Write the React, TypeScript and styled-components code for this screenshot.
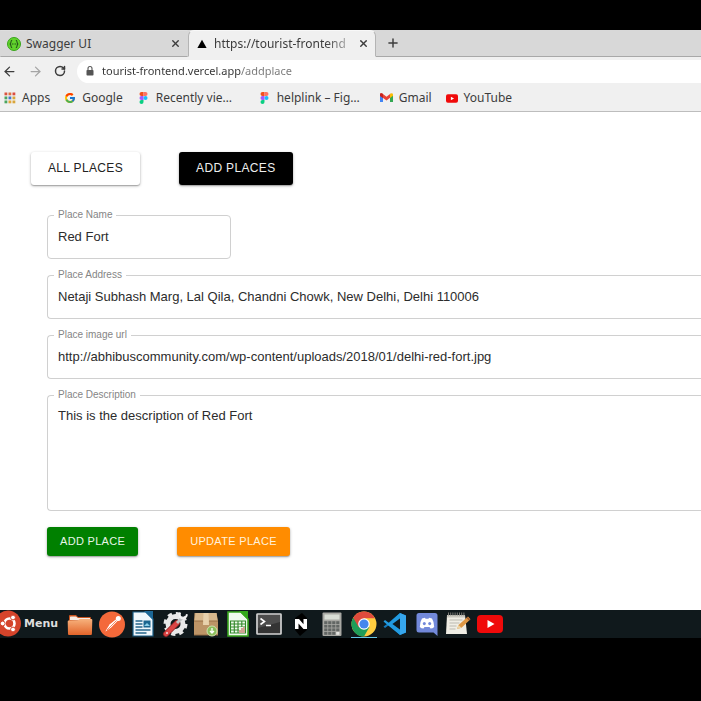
import React, { useState } from "react";
import styled, { createGlobalStyle } from "styled-components";
import { ArrowLeft, ArrowRight, Plus, RotateCw, X } from "lucide-react";
import { FcGoogle } from "react-icons/fc";

const GlobalStyle = createGlobalStyle`
  * { box-sizing: border-box; }
  body { margin: 0; background: #000; overflow: hidden; }
  button, input, textarea { font: inherit; color: inherit; }
  svg { display: block; flex: none; }
`;

const uiFont = `"Noto Sans", "Open Sans", sans-serif`;
const pageFont = `"Liberation Sans", Arial, sans-serif`;

const Screen = styled.div`
  display: flex;
  flex-direction: column;
  min-height: 100vh;
  padding: 30px 0 63px;
  background: #000;
  overflow: hidden;
`;

const Browser = styled.div`
  display: flex;
  flex-direction: column;
  flex: 1;
  background: #fff;
`;

const Chrome = styled.header`
  font-family: ${uiFont};
  color: #3c3c3c;
  background: #f0f0f0;
  border-bottom: 1px solid #bdbdbd;
`;

const TabStrip = styled.div`
  display: flex;
  height: 27px;
  background: #d8d8d8;
`;

const Tab = styled.div<{ $active?: boolean }>`
  display: flex;
  align-items: center;
  width: 188px;
  padding: 0 6px;
  background: ${(p) => (p.$active ? "#f0f0f0" : "#d8d8d8")};
  border: 1px solid ${(p) => (p.$active ? "#b4b4b4" : "transparent")};
  border-bottom-color: ${(p) => (p.$active ? "#f0f0f0" : "#a8a8a8")};
  border-top-color: ${(p) => (p.$active ? "#f8f8f8" : "#dedede")};
  border-radius: ${(p) => (p.$active ? "6px 6px 0 0" : "0")};
`;

const TabTitle = styled.button<{ $fade?: boolean }>`
  flex: 1;
  min-width: 0;
  margin: 0 5px;
  padding: 0;
  border: 0;
  background: none;
  white-space: nowrap;
  text-align: left;
  font-size: 12px;
  line-height: 20px;
  ${(p) => p.$fade && "mask-image: linear-gradient(to right, #000 80%, rgba(0, 0, 0, 0.2));"}
`;

const IconButton = styled.button`
  display: grid;
  place-items: center;
  padding: 0;
  border: 0;
  background: none;
`;

const StripRest = styled.div`
  display: flex;
  flex: 1;
  padding-left: 10px;
  border-bottom: 1px solid #a8a8a8;
`;

const Toolbar = styled.div`
  display: flex;
  align-items: center;
  height: 28px;
  padding-left: 2px;
  gap: 11px;
`;

const AddressBar = styled.label`
  display: flex;
  align-items: center;
  flex: 1;
  height: 23px;
  padding-left: 8px;
  gap: 7px;
  background: #fff;
  border-radius: 12px 0 0 12px;
`;

const AddressInput = styled.input`
  flex: 1;
  min-width: 0;
  padding: 0;
  border: 0;
  outline: 0;
  font-size: 11px;
  line-height: 20px;
  color: transparent;
  caret-color: #333;
  background: linear-gradient(to right, #333 139px, #777 139px);
  background-clip: text;
  -webkit-background-clip: text;
`;

const Bookmarks = styled.nav`
  display: flex;
  align-items: center;
  height: 26px;
  padding-left: 4px;
  gap: 14px;
`;

const Bookmark = styled.a<{ $width?: number }>`
  display: flex;
  align-items: center;
  gap: 6px;
  width: ${(p) => (p.$width ? `${p.$width}px` : "auto")};
  color: inherit;
  text-decoration: none;
  white-space: nowrap;
  font-size: 12px;
  line-height: 20px;
`;

const Page = styled.main`
  flex: 1;
  padding: 40px 0 0 31px;
  font-family: ${pageFont};
  color: #2c2c2c;
`;

const PageNav = styled.nav`
  display: flex;
  gap: 39px;
`;

const buttonTones = {
  white: ["#fff", "#222"],
  black: ["#000", "#eee"],
  green: ["#008000", "#e8f5e8"],
  orange: ["#ff8c00", "#fff1dc"],
};

const Button = styled.button<{ $tone: keyof typeof buttonTones; $small?: boolean }>`
  height: ${(p) => (p.$small ? 29 : 33)}px;
  padding: ${(p) => (p.$small ? "0 13px 1px" : "0 17px 2px")};
  border: 0;
  border-radius: 3px;
  background: ${(p) => buttonTones[p.$tone][0]};
  color: ${(p) => buttonTones[p.$tone][1]};
  font-size: ${(p) => (p.$small ? 11 : 12)}px;
  letter-spacing: 0.02857em;
  line-height: 20px;
  box-shadow: 0 1px 3px rgba(0, 0, 0, 0.3), 0 1px 1px rgba(0, 0, 0, 0.18);
`;

const Form = styled.form`
  display: flex;
  flex-direction: column;
  gap: 10px;
  padding: 24px 0 0 16px;
`;

const Outline = styled.fieldset<{ $short?: boolean }>`
  min-width: 0;
  width: ${(p) => (p.$short ? "184px" : "auto")};
  margin: 0;
  padding: 0 6px;
  border: 1px solid #d0d0d0;
  border-right-width: ${(p) => (p.$short ? "1px" : "0")};
  border-radius: ${(p) => (p.$short ? "4px" : "4px 0 0 4px")};
`;

const Legend = styled.legend`
  padding: 0 4px;
  color: #858585;
  font-size: 10px;
  line-height: 12px;
`;

const TextInput = styled.input`
  display: block;
  width: 100%;
  height: 37px;
  padding: 0 4px 7px;
  border: 0;
  outline: 0;
  background: none;
  font-size: 13px;
`;

const TextArea = styled.textarea`
  display: block;
  width: 100%;
  height: 109px;
  padding: 7px 4px;
  border: 0;
  outline: 0;
  resize: none;
  background: none;
  font-size: 13px;
  line-height: 16px;
`;

const Actions = styled.div`
  display: flex;
  gap: 39px;
  padding-top: 6px;
`;

const Taskbar = styled.footer`
  display: flex;
  align-items: center;
  height: 28px;
  background: #10191c;
`;

const MenuButton = styled.button`
  display: flex;
  align-items: center;
  gap: 3px;
  width: 67px;
  padding: 0;
  border: 0;
  background: none;
  color: #dedede;
  font: bold 11px/20px "DejaVu Sans", sans-serif;
  white-space: nowrap;
`;

const Launchers = styled.div`
  display: flex;
  justify-content: space-between;
  width: 436px;
`;

const Launcher = styled.button<{ $running?: boolean }>`
  display: grid;
  place-items: center;
  width: 26px;
  height: 28px;
  padding: 0;
  border: 0;
  border-bottom: ${(p) => (p.$running ? "1px solid #65c7e8" : "0")};
  background: none;
`;

const SwaggerIcon = () => (
  <svg width="14" height="14" viewBox="0 0 14 14">
    <circle cx="7" cy="7" r="6.5" fill="#62d42c" stroke="#39a51b" />
    <path d="M5.2 3.2c-1.7 0-.8 2.8-2 3.8 1.2 1 .3 3.800 2 3.800M8.800 3.200c1.700 0 .8 2.800 2 3.800-1.200 1-.3 3.800-2 3.800" fill="none" stroke="#23551a" strokeWidth="1.1" />
    <path d="M5 7h4" stroke="#23551a" strokeWidth="1.2" strokeDasharray="1 .5" />
  </svg>
);

const TriangleIcon = () => (
  <svg width="14" height="10" viewBox="0 0 14 10"><path d="M7 .8 11.600 9H2.400z" fill="#000" /></svg>
);

const LockIcon = () => (
  <svg width="10" height="12" viewBox="0 0 10 12">
    <rect x="1.5" y="5" width="7" height="5.6" rx=".8" fill="#555" />
    <path d="M3 5V3.5a2 2 0 0 1 4 0V5" fill="none" stroke="#555" strokeWidth="1.1" />
  </svg>
);

const dots = ["#d9533f", "#e07040", "#dc4b3e", "#4ba45e", "#4677c8", "#d9a53a", "#4ba45e", "#e3a63a", "#d9a53a"];
const AppsIcon = () => (
  <svg width="12" height="12" viewBox="0 0 12 12">
    {dots.map((c, i) => <rect key={i} x={(i % 3) * 4 + 0.5} y={Math.floor(i / 3) * 4 + 0.5} width="2.8" height="2.8" fill={c} />)}
  </svg>
);

const FigmaIcon = () => (
  <svg width="13" height="12" viewBox="-3 0 16 15">
    <path d="M5 0H2.5a2.5 2.5 0 0 0 0 5H5z" fill="#f24e1e" />
    <path d="M5 0h2.5a2.5 2.5 0 0 1 0 5H5z" fill="#ff7262" />
    <path d="M5 5H2.5a2.5 2.5 0 0 0 0 5H5z" fill="#a259ff" />
    <circle cx="7.5" cy="7.5" r="2.5" fill="#1abcfe" />
    <path d="M5 10H2.5A2.5 2.5 0 1 0 5 12.5z" fill="#0acf83" />
  </svg>
);

const GmailIcon = () => (
  <svg width="13" height="10" viewBox="0 0 13 10">
    <path d="M0 1.5V9h3V4z" fill="#4285f4" />
    <path d="M13 1.5V9h-3V4z" fill="#34a853" />
    <path d="M0 1.5C0 .3 1.4-.2 2.3.6l4.2 3.2L10.7.6v3.6L6.5 7.4 0 2.8z" fill="#ea4335" />
    <path d="M10 1.1C11.5-.3 13 .3 13 1.8v1l-3 2.1z" fill="#fbbc04" />
    <path d="M0 1.6V3l3 2V1C1.4-.2 0 .3 0 1.6z" fill="#c5221f" />
  </svg>
);

const YouTubeIcon = ({ w, h }: { w: number; h: number }) => (
  <svg width={w} height={h} viewBox="0 0 26 18">
    <rect width="26" height="18" rx="4" fill="#f00a0a" />
    <path d="m10.5 5 7 4-7 4z" fill="#fff" />
  </svg>
);

const UbuntuIcon = () => (
  <svg width="21" height="28" viewBox="0 0 21 28">
    <circle cx="8" cy="13.5" r="13" fill="#d5442b" />
    <circle cx="9.5" cy="13.5" r="5" fill="none" stroke="#fff" strokeWidth="2.6" />
    <g fill="#fff" stroke="#d5442b" strokeWidth="1">
      <circle cx="2.7" cy="13.5" r="2.4" />
      <circle cx="13" cy="7.5" r="2.4" />
      <circle cx="13" cy="19.5" r="2.4" />
    </g>
  </svg>
);

const FolderIcon = () => (
  <svg width="26" height="26" viewBox="0 0 26 26">
    <defs><linearGradient id="folder" x1="0" y1="0" x2="0" y2="1"><stop stopColor="#f7b27d" /><stop offset="1" stopColor="#e2642a" /></linearGradient></defs>
    <path d="M2 21V5q0-1 1-1h6l2 2h12q1 0 1 1v14z" fill="#c8541f" />
    <path d="M3 9V6q0-.6.7-.6H9L11 7h12v3z" fill="#f5ece4" />
    <path d="M.7 10.5q0-1 1-1h9l2-1.500h11.600q1 0 1 1l-.4 14q0 1-1 1H2q-1 0-1-1z" fill="url(#folder)" />
  </svg>
);

const PostmanIcon = () => (
  <svg width="26" height="27" viewBox="0 0 26 27">
    <circle cx="13" cy="13.5" r="13" fill="#f4693a" />
    <path d="m6 21 4.500-7.500L17.500 8l1.500 1.500-6.600 6.700z" fill="#fff" />
    <circle cx="19.3" cy="7.500" r="2.500" fill="#fff" />
    <path d="m8 19 9.500-9.500M6 21l5-2" stroke="#f4693a" strokeWidth=".8" />
  </svg>
);

const WriterIcon = () => (
  <svg width="26" height="28" viewBox="0 0 26 28">
    <path d="M3 2h13l7 7v17H3z" fill="#f0f7fb" stroke="#175d86" strokeWidth="1.2" />
    <path d="M14 1h9v9z" fill="#1c6796" />
    <path d="M5.5 11h7M5.5 14h7M5.5 17h7M5.5 20h15M5.5 23h11" stroke="#25658b" strokeWidth="1.4" />
    <rect x="13.5" y="10.5" width="7" height="7" fill="#1b668f" />
    <path d="m14 16 3-3 3 3z" fill="#8bd0ea" />
  </svg>
);

const SettingsIcon = () => (
  <svg width="26" height="28" viewBox="0 0 26 28">
    <circle cx="13.5" cy="14" r="7.5" fill="none" stroke="#e8e8e8" strokeWidth="5" />
    <circle cx="13.5" cy="14" r="10.5" fill="none" stroke="#e8e8e8" strokeWidth="3" strokeDasharray="4.3 3.95" />
    <path d="m4 24 11-11" stroke="#8f2424" strokeWidth="6" strokeLinecap="round" />
    <path d="m4 24 11-11" stroke="#db4444" strokeWidth="4.4" strokeLinecap="round" />
    <path d="m15 13 6-6" stroke="#bfc3c3" strokeWidth="3" />
    <path d="M18 2.5q-1 5 2 5.800 4 .4 5-4" fill="none" stroke="#f2f2f2" strokeWidth="2" />
    <circle cx="5" cy="23" r="1" fill="#f5d8d8" />
  </svg>
);

const PackageIcon = () => (
  <svg width="26" height="28" viewBox="0 0 26 28">
    <path d="M1.500 3h22l1.500 8v14H1V11z" fill="#bd9567" />
    <path d="M2.500 3h21l1 8H1.500z" fill="#d7b88c" />
    <path d="M10.500 3h5l.5 12h-6z" fill="#e8d2ac" />
    <path d="M1 11h9M16 11h9M1 25h24" stroke="#987047" />
    <circle cx="19" cy="21" r="5" fill="#8cbf5c" stroke="#cde2ad" />
    <path d="M19 18v5m-2-2 2 2 2-2" fill="none" stroke="#fff" strokeWidth="1.3" />
  </svg>
);

const SheetIcon = () => (
  <svg width="26" height="28" viewBox="0 0 26 28">
    <path d="M3 2h13l7 7v17H3z" fill="#f0faed" stroke="#38a51d" strokeWidth="1.6" />
    <path d="M14 1h9v9z" fill="#35a81b" />
    <path d="M5.500 11h15v12h-15zM5.500 14h15M5.500 17h15M5.500 20h15M9.300 11v12M13 11v12M16.800 11v12" fill="none" stroke="#31882a" strokeWidth="1.1" />
    <path d="M14 17h6v6h-6z" fill="#eaf4e7" />
    <path d="M15 23v-3M17 23v-5M19 23v-6" stroke="#c78270" strokeWidth="1.4" />
  </svg>
);

const TerminalIcon = () => (
  <svg width="26" height="24" viewBox="0 0 26 24">
    <rect x="1" y="2" width="24" height="20" rx=".6" fill="#343434" stroke="#d3d3d3" strokeWidth="1.7" />
    <path d="M2 3h22v7L2 16z" fill="#4d4d4d" />
    <path d="m4.500 6.500 4 3-4 3M10 13.500h5" fill="none" stroke="#fff" strokeWidth="1.6" />
  </svg>
);

const NotionIcon = () => (
  <svg width="26" height="28" viewBox="0 0 26 28">
    <path d="M7 8 14 3l5 5v12l-7 6-5-6z" fill="#000" />
    <path d="M7 19V9h4l4.500 5.200V9H19v10h-3.500L10.500 13.500V19z" fill="#fff" />
  </svg>
);

const CalculatorIcon = () => (
  <svg width="20" height="26" viewBox="0 0 20 26">
    <rect x=".5" y="1.500" width="19" height="23.500" rx="1" fill="#a8a8a3" />
    <rect x="2.500" y="3.500" width="15" height="5" fill="#d8ddd5" />
    {Array.from({ length: 16 }, (_, i) => (
      <rect key={i} x={2.2 + (i % 4) * 4} y={10.2 + Math.floor(i / 4) * 3.6} width="3.2" height="2.8" fill={i === 15 ? "#e4e4e0" : "#626664"} />
    ))}
  </svg>
);

const ChromeIcon = () => (
  <svg width="26" height="26" viewBox="0 0 26 26">
    <circle cx="13" cy="13" r="12.5" fill="#ffcd40" />
    <path d="M13 13 2.200 6.700A12.500 12.500 0 0 0 13 25.500L18.400 16z" fill="#1f9d58" />
    <path d="M2.200 6.700A12.500 12.500 0 0 1 24 7.200H13L7.700 16.200z" fill="#df4b3c" />
    <circle cx="13" cy="13" r="5.8" fill="#fff" />
    <circle cx="13" cy="13" r="4.6" fill="#4587ed" />
  </svg>
);

const CodeIcon = () => (
  <svg width="24" height="24" viewBox="0 0 24 24">
    <path d="m17 1 6 2.500v17L17 23 6 13 2 16l-1.500-1.400L4 11.900z" fill="#1479bb" />
    <path d="M17 1 6 11 2 8 .5 9.400l3.500 3.200L17 23v-5.500L9.500 12 17 6.500z" fill="#229be0" />
    <path d="m17 1 6 2.500v17L17 23z" fill="#36a7ed" />
    <path d="M17 6.500v11L9.500 12z" fill="#10191c" />
  </svg>
);

const DiscordIcon = () => (
  <svg width="24" height="26" viewBox="0 0 24 26">
    <path d="M4 2h16q2.500 0 2.500 2.500V25l-4-3.500H4Q1.500 21.500 1.500 19V4.500Q1.500 2 4 2z" fill="#7289da" />
    <path d="M7 7.500 10 6.800l.5 1h3l.5-1 3 .7q2.200 3.500 2.200 8.500-1.500 1.500-3.700 1.600l-1-1.600h-5l-1 1.600Q6.300 17.500 4.800 16 4.800 11 7 7.500z" fill="#fff" />
    <ellipse cx="9.300" cy="12.600" rx="1.500" ry="1.700" fill="#7289da" />
    <ellipse cx="14.700" cy="12.600" rx="1.500" ry="1.700" fill="#7289da" />
  </svg>
);

const NotesIcon = () => (
  <svg width="26" height="26" viewBox="0 0 26 26">
    <path d="M2 4h18l2 19H1z" fill="#f0eee5" />
    <path d="M2 4h18v2.500H2z" fill="#c9c7be" />
    <path d="M3 3h17" stroke="#7b7b76" strokeWidth="3" strokeDasharray="1 1.200" />
    <path d="M4.500 9h13M4.500 12h10M4.500 15h7M4.500 18h6" stroke="#bbb9b0" />
    <path d="m12 18 1.500-4L23 5.500l2.500 2.700-9 8.600z" fill="#df9845" />
    <path d="m12 18 1.500-4 3 2.800z" fill="#ead4a5" />
    <path d="m22 6.400 2.500 2.700" stroke="#a35a2c" strokeWidth="1.500" />
  </svg>
);

const bookmarks = [
  { label: "Apps", icon: <AppsIcon /> },
  { label: "Google", icon: <FcGoogle size={12} /> },
  { label: "Recently vie…", icon: <FigmaIcon />, width: 107 },
  { label: "helplink – Fig…", icon: <FigmaIcon />, width: 108 },
  { label: "Gmail", icon: <GmailIcon /> },
  { label: "YouTube", icon: <YouTubeIcon w={12} h={9} /> },
];

const launchers = [
  { name: "Files", icon: <FolderIcon /> },
  { name: "Postman", icon: <PostmanIcon /> },
  { name: "Writer", icon: <WriterIcon /> },
  { name: "Settings", icon: <SettingsIcon /> },
  { name: "Packages", icon: <PackageIcon /> },
  { name: "Calc", icon: <SheetIcon /> },
  { name: "Terminal", icon: <TerminalIcon /> },
  { name: "Notion", icon: <NotionIcon /> },
  { name: "Calculator", icon: <CalculatorIcon /> },
  { name: "Chrome", icon: <ChromeIcon />, running: true },
  { name: "Code", icon: <CodeIcon /> },
  { name: "Discord", icon: <DiscordIcon /> },
  { name: "Notes", icon: <NotesIcon /> },
  { name: "YouTube", icon: <YouTubeIcon w={26} h={18} /> },
];

type FieldProps = { id: string; label: string; initial: string; short?: boolean; multiline?: boolean };

function Field({ id, label, initial, short, multiline }: FieldProps) {
  const [value, setValue] = useState(initial);
  return (
    <Outline $short={short}>
      <Legend><label htmlFor={id}>{label}</label></Legend>
      {multiline
        ? <TextArea id={id} value={value} onChange={(e) => setValue(e.target.value)} />
        : <TextInput id={id} value={value} onChange={(e) => setValue(e.target.value)} />}
    </Outline>
  );
}

export default function App() {
  return (
    <Screen>
      <GlobalStyle />
      <Browser>
        <Chrome>
          <TabStrip>
            <Tab>
              <SwaggerIcon />
              <TabTitle>Swagger UI</TabTitle>
              <IconButton aria-label="Close Swagger UI"><X size={11} strokeWidth={3} /></IconButton>
            </Tab>
            <Tab $active>
              <TriangleIcon />
              <TabTitle $fade>https://tourist-frontend</TabTitle>
              <IconButton aria-label="Close tourist-frontend"><X size={11} strokeWidth={3} /></IconButton>
            </Tab>
            <StripRest>
              <IconButton aria-label="New tab"><Plus size={14} strokeWidth={2.5} /></IconButton>
            </StripRest>
          </TabStrip>
          <Toolbar>
            <IconButton aria-label="Back"><ArrowLeft size={15} /></IconButton>
            <IconButton aria-label="Forward" disabled><ArrowRight size={15} color="#a5a5a5" /></IconButton>
            <IconButton aria-label="Reload"><RotateCw size={12} strokeWidth={3} /></IconButton>
            <AddressBar>
              <LockIcon />
              <AddressInput aria-label="Address" defaultValue="tourist-frontend.vercel.app/addplace" />
            </AddressBar>
          </Toolbar>
          <Bookmarks>
            {bookmarks.map((b) => (
              <Bookmark key={b.label} href="#" $width={b.width}>{b.icon}{b.label}</Bookmark>
            ))}
          </Bookmarks>
        </Chrome>
        <Page>
          <PageNav>
            <Button $tone="white">ALL PLACES</Button>
            <Button $tone="black">ADD PLACES</Button>
          </PageNav>
          <Form onSubmit={(e) => e.preventDefault()}>
            <Field id="name" label="Place Name" initial="Red Fort" short />
            <Field id="address" label="Place Address" initial="Netaji Subhash Marg, Lal Qila, Chandni Chowk, New Delhi, Delhi 110006" />
            <Field id="image" label="Place image url" initial="http://abhibuscommunity.com/wp-content/uploads/2018/01/delhi-red-fort.jpg" />
            <Field id="description" label="Place Description" initial="This is the description of Red Fort" multiline />
            <Actions>
              <Button type="submit" $tone="green" $small>ADD PLACE</Button>
              <Button type="button" $tone="orange" $small>UPDATE PLACE</Button>
            </Actions>
          </Form>
        </Page>
      </Browser>
      <Taskbar>
        <MenuButton><UbuntuIcon />Menu</MenuButton>
        <Launchers>
          {launchers.map((l) => (
            <Launcher key={l.name} aria-label={l.name} $running={l.running}>{l.icon}</Launcher>
          ))}
        </Launchers>
      </Taskbar>
    </Screen>
  );
}
